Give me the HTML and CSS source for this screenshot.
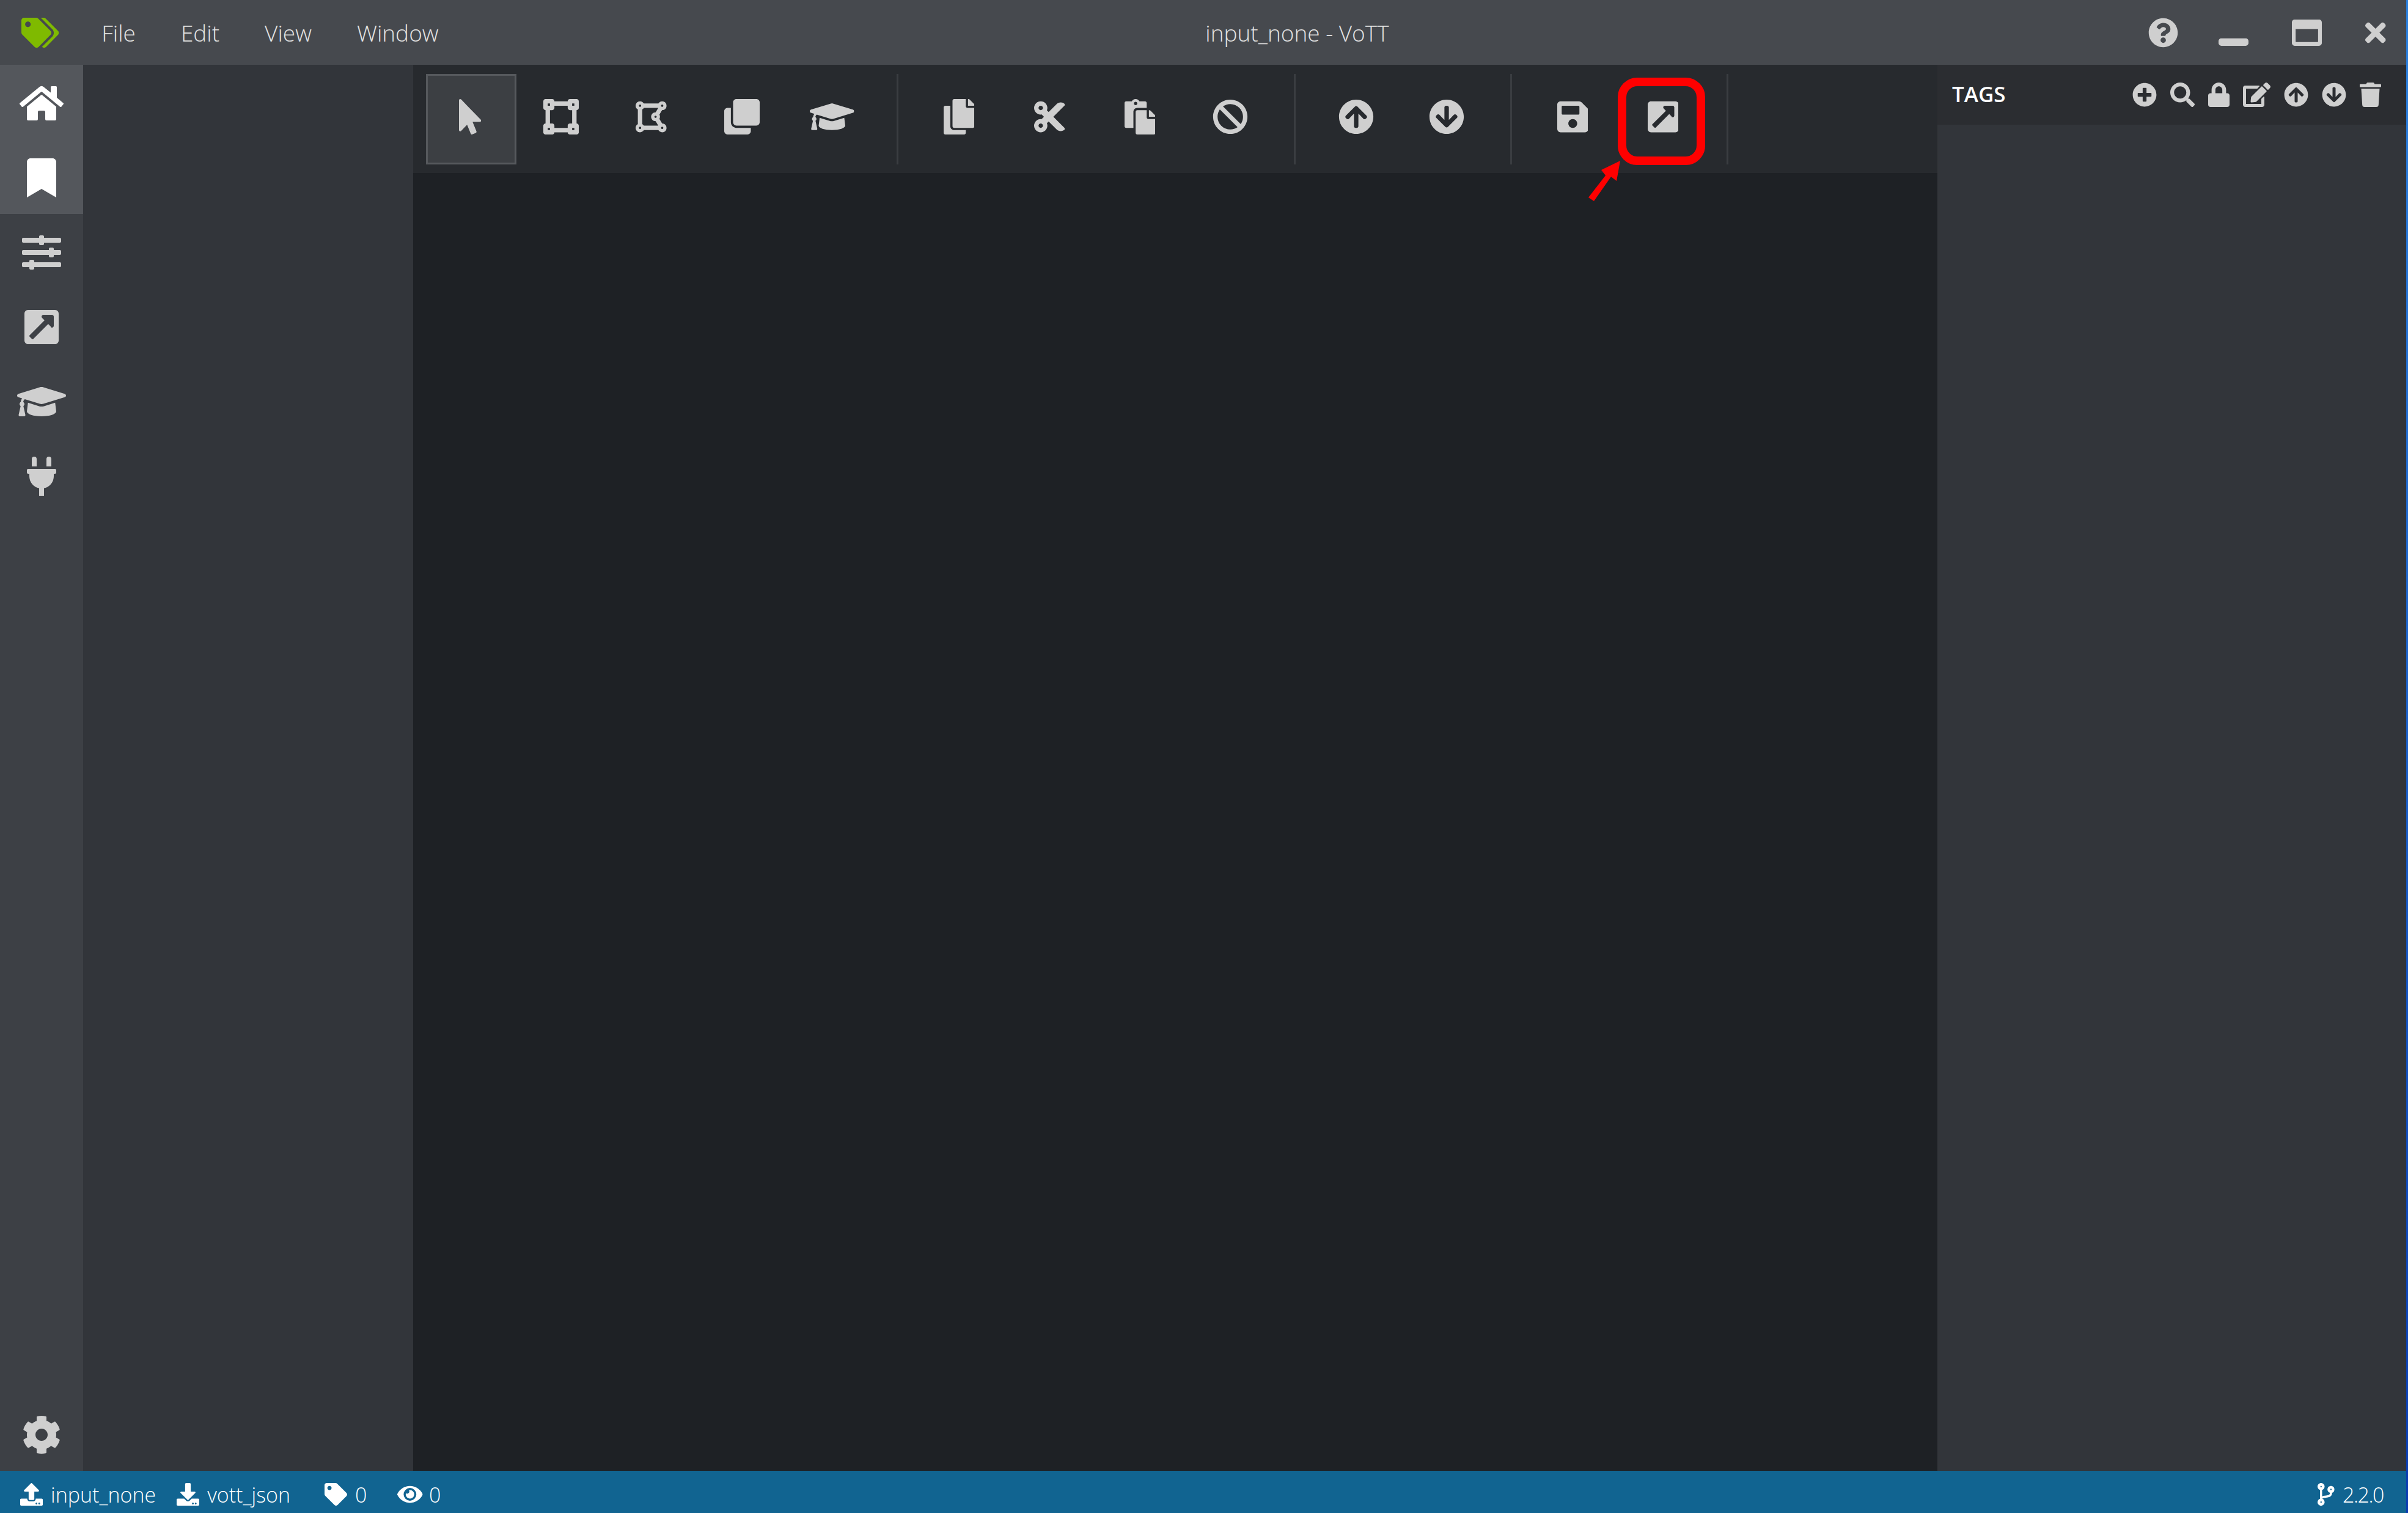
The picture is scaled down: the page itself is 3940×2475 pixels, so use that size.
FILE: index.html
```html
<!DOCTYPE html>
<html lang="en">

<head>
  <meta charset="utf-8" />
  <title>input_none - VoTT</title>
  <link rel="stylesheet" href="styles.css">
</head>

<body>
  <svg class="sprite" xmlns="http://www.w3.org/2000/svg">
    <symbol id="i-tags" viewBox="0 0 640 512"><path d="M497.941 225.941L286.059 14.059A48 48 0 0 0 252.118 0H48C21.49 0 0 21.49 0 48v204.118a48 48 0 0 0 14.059 33.941l211.882 211.882c18.744 18.745 49.136 18.746 67.882 0l204.118-204.118c18.745-18.745 18.745-49.137 0-67.882zM112 160c-26.51 0-48-21.49-48-48s21.49-48 48-48 48 21.49 48 48-21.49 48-48 48zm513.941 133.823L421.823 497.941c-18.745 18.745-49.137 18.745-67.882 0l-.36-.36L527.64 323.522c16.999-16.999 26.36-39.6 26.36-63.64s-9.362-46.641-26.36-63.64L331.397 0h48.721a48 48 0 0 1 33.941 14.059l211.882 211.882c18.745 18.745 18.745 49.137 0 67.882z"/></symbol>
    <symbol id="i-question" viewBox="0 0 512 512"><path d="M504 256c0 136.997-111.043 248-248 248S8 392.997 8 256C8 119.083 119.043 8 256 8s248 111.083 248 248zM262.655 90c-54.497 0-89.255 22.957-116.549 63.758-3.536 5.286-2.353 12.415 2.715 16.258l34.699 26.31c5.205 3.947 12.621 3.008 16.665-2.122 17.864-22.658 30.113-35.797 57.303-35.797 20.429 0 45.698 13.148 45.698 32.958 0 14.976-12.363 22.667-32.534 33.976C247.128 238.528 216 254.941 216 296v4c0 6.627 5.373 12 12 12h56c6.627 0 12-5.373 12-12v-1.333c0-28.462 83.186-29.647 83.186-106.667 0-58.002-60.165-102-116.531-102zM256 338c-25.365 0-46 20.635-46 46 0 25.364 20.635 46 46 46s46-20.636 46-46c0-25.365-20.635-46-46-46z"/></symbol>
    <symbol id="i-minimize" viewBox="0 0 512 512"><path d="M464 352H48c-26.5 0-48 21.5-48 48v32c0 26.5 21.5 48 48 48h416c26.5 0 48-21.5 48-48v-32c0-26.5-21.5-48-48-48z"/></symbol>
    <symbol id="i-maximize" viewBox="0 0 512 512"><path d="M464 32H48C21.5 32 0 53.5 0 80v352c0 26.5 21.5 48 48 48h416c26.5 0 48-21.5 48-48V80c0-26.5-21.5-48-48-48zm-16 372c0 6.6-5.4 12-12 12H76c-6.6 0-12-5.4-12-12V192h384v212z"/></symbol>
    <symbol id="i-times" viewBox="0 0 352 512"><path d="M242.72 256l100.07-100.07c12.28-12.28 12.28-32.19 0-44.48l-22.24-22.24c-12.28-12.28-32.19-12.28-44.48 0L176 189.28 75.93 89.21c-12.28-12.28-32.19-12.28-44.48 0L9.21 111.45c-12.28 12.28-12.28 32.19 0 44.48L109.28 256 9.21 356.07c-12.28 12.28-12.28 32.19 0 44.48l22.24 22.24c12.28 12.28 32.2 12.28 44.48 0L176 322.72l100.07 100.07c12.28 12.28 32.2 12.28 44.48 0l22.24-22.24c12.28-12.28 12.28-32.19 0-44.48L242.72 256z"/></symbol>
    <symbol id="i-home" viewBox="0 0 576 512"><path d="M280.37 148.26L96 300.11V464a16 16 0 0 0 16 16l112.06-.29a16 16 0 0 0 15.92-16V368a16 16 0 0 1 16-16h64a16 16 0 0 1 16 16v95.64a16 16 0 0 0 16 16.05L464 480a16 16 0 0 0 16-16V300L295.67 148.26a12.19 12.19 0 0 0-15.3 0zM571.6 251.47L488 182.56V44.05a12 12 0 0 0-12-12h-56a12 12 0 0 0-12 12v72.61L318.47 43a48 48 0 0 0-61 0L4.34 251.47a12 12 0 0 0-1.6 16.9l25.5 31A12 12 0 0 0 45.15 301l235.22-193.74a12.19 12.19 0 0 1 15.3 0L530.9 301a12 12 0 0 0 16.9-1.6l25.5-31a12 12 0 0 0-1.7-16.93z"/></symbol>
    <symbol id="i-bookmark" viewBox="0 0 384 512"><path d="M0 512V48C0 21.49 21.49 0 48 0h288c26.51 0 48 21.49 48 48v464L192 400 0 512z"/></symbol>
    <symbol id="i-sliders" viewBox="0 0 512 512"><path d="M496 384H160v-16c0-8.8-7.2-16-16-16h-32c-8.8 0-16 7.2-16 16v16H16c-8.8 0-16 7.2-16 16v32c0 8.8 7.2 16 16 16h80v16c0 8.8 7.2 16 16 16h32c8.8 0 16-7.2 16-16v-16h336c8.8 0 16-7.2 16-16v-32c0-8.8-7.2-16-16-16zm0-160h-80v-16c0-8.8-7.2-16-16-16h-32c-8.8 0-16 7.2-16 16v16H16c-8.8 0-16 7.2-16 16v32c0 8.8 7.2 16 16 16h336v16c0 8.8 7.2 16 16 16h32c8.8 0 16-7.2 16-16v-16h80c8.8 0 16-7.2 16-16v-32c0-8.8-7.2-16-16-16zm0-160H288V48c0-8.8-7.2-16-16-16h-32c-8.8 0-16 7.2-16 16v16H16C7.2 64 0 71.2 0 80v32c0 8.8 7.2 16 16 16h208v16c0 8.8 7.2 16 16 16h32c8.8 0 16-7.2 16-16v-16h208c8.8 0 16-7.2 16-16V80c0-8.8-7.2-16-16-16z"/></symbol>
    <symbol id="i-export" viewBox="0 0 448 512"><path d="M448 80v352c0 26.51-21.49 48-48 48H48c-26.51 0-48-21.49-48-48V80c0-26.51 21.49-48 48-48h352c26.51 0 48 21.49 48 48zm-88 16H248.029c-21.313 0-32.08 25.861-16.971 40.971l31.984 31.987L67.515 364.485c-4.686 4.686-4.686 12.284 0 16.971l31.029 31.029c4.687 4.686 12.285 4.686 16.971 0l195.526-195.526 31.988 31.991C347.713 273.793 384 263.16 384 239.9V120c0-13.255-10.745-24-24-24z"/></symbol>
    <symbol id="i-cap" viewBox="0 0 640 512"><path d="M622.34 153.2L343.4 67.5c-15.2-4.67-31.6-4.67-46.79 0L17.66 153.2c-23.54 7.23-23.54 38.36 0 45.59l48.63 14.94c-10.67 13.19-17.23 29.28-17.88 46.9C38.78 266.15 32 276.11 32 288c0 10.78 5.68 19.85 13.86 25.65L20.33 428.53C18.11 438.52 25.71 448 35.94 448h56.11c10.24 0 17.84-9.48 15.62-19.47L82.14 313.65C90.32 307.85 96 298.78 96 288c0-11.57-6.47-21.25-15.66-26.87.76-15.02 8.44-28.3 20.69-36.72L296.6 284.5c9.06 2.78 26.44 6.25 46.79 0l278.95-85.7c23.55-7.24 23.55-38.36 0-45.6zM352.79 315.09c-28.53 8.76-52.84 3.92-65.59 0l-145.02-44.55L128 384c0 35.35 85.96 64 192 64s192-28.65 192-64l-14.18-113.47-145.03 44.56z"/></symbol>
    <symbol id="i-plug" viewBox="0 0 384 512"><path d="M320,32a32,32,0,0,0-64,0v96h64Zm48,128H16A16,16,0,0,0,0,176v32a16,16,0,0,0,16,16H32v32A160.07,160.07,0,0,0,160,412.8V512h64V412.8A160.07,160.07,0,0,0,352,256V224h16a16,16,0,0,0,16-16V176A16,16,0,0,0,368,160ZM128,32a32,32,0,0,0-64,0v96h64Z"/></symbol>
    <symbol id="i-cog" viewBox="0 0 512 512"><path d="M487.4 315.7l-42.6-24.6c4.3-23.2 4.3-47 0-70.2l42.6-24.6c4.9-2.8 7.1-8.6 5.5-14-11.1-35.6-30-67.8-54.7-94.6-3.8-4.1-10-5.1-14.8-2.3L380.8 110c-17.9-15.4-38.5-27.3-60.8-35.1V25.8c0-5.6-3.9-10.5-9.4-11.7-36.7-8.2-74.3-7.8-109.2 0-5.5 1.2-9.4 6.1-9.4 11.7V75c-22.2 7.9-42.8 19.8-60.8 35.1L88.7 85.5c-4.9-2.8-11-1.9-14.8 2.3-24.7 26.7-43.6 58.9-54.7 94.6-1.7 5.4.6 11.2 5.5 14L67.3 221c-4.3 23.2-4.3 47 0 70.2l-42.6 24.6c-4.9 2.8-7.1 8.6-5.5 14 11.1 35.6 30 67.8 54.7 94.6 3.8 4.1 10 5.1 14.8 2.3l42.6-24.6c17.9 15.4 38.5 27.3 60.8 35.1v49.2c0 5.6 3.9 10.5 9.4 11.7 36.7 8.2 74.3 7.8 109.2 0 5.5-1.2 9.4-6.1 9.4-11.7v-49.2c22.2-7.9 42.8-19.8 60.8-35.1l42.6 24.6c4.9 2.8 11 1.9 14.8-2.3 24.7-26.7 43.6-58.9 54.7-94.6 1.5-5.5-.7-11.3-5.6-14.1zM256 336c-44.1 0-80-35.9-80-80s35.9-80 80-80 80 35.9 80 80-35.9 80-80 80z"/></symbol>
    <symbol id="i-pointer" viewBox="0 0 320 512"><path d="M302.189 329.126H196.105l55.831 135.993c3.889 9.428-.555 19.999-9.444 23.999l-49.165 21.427c-9.165 4-19.443-.571-23.332-9.714l-53.053-129.136-86.664 89.138C18.729 472.71 0 463.554 0 447.977V18.299C0 1.899 19.921-6.096 30.277 5.443l284.412 292.542c11.472 11.179 3.007 31.141-12.5 31.141z"/></symbol>
    <symbol id="i-vector" viewBox="0 0 512 512"><path d="M512 128V32c0-17.67-14.33-32-32-32h-96c-17.67 0-32 14.33-32 32H160c0-17.67-14.33-32-32-32H32C14.33 0 0 14.33 0 32v96c0 17.67 14.33 32 32 32v192c-17.67 0-32 14.33-32 32v96c0 17.67 14.33 32 32 32h96c17.67 0 32-14.33 32-32h192c0 17.67 14.33 32 32 32h96c17.67 0 32-14.33 32-32v-96c0-17.67-14.33-32-32-32V160c17.67 0 32-14.33 32-32zm-96-64h32v32h-32V64zM64 64h32v32H64V64zm32 384H64v-32h32v32zm352 0h-32v-32h32v32zm-32-96h-32c-17.67 0-32 14.33-32 32v32H160v-32c0-17.67-14.33-32-32-32H96V160h32c17.67 0 32-14.33 32-32V96h192v32c0 17.67 14.33 32 32 32h32v192z"/></symbol>
    <symbol id="i-polygon" viewBox="0 0 448 512"><path d="M384 352c-.35 0-.67.1-1.02.1l-39.2-65.32c5.07-9.17 8.22-19.56 8.22-30.78s-3.14-21.61-8.22-30.78l39.2-65.32c.35.01.67.1 1.02.1 35.35 0 64-28.65 64-64s-28.65-64-64-64c-23.63 0-44.04 12.95-55.12 32H119.12C108.04 44.95 87.63 32 64 32 28.65 32 0 60.65 0 96c0 23.63 12.95 44.04 32 55.12v209.75C12.95 371.96 0 392.37 0 416c0 35.35 28.65 64 64 64 23.63 0 44.04-12.95 55.12-32h209.75c11.09 19.05 31.49 32 55.12 32 35.35 0 64-28.65 64-64 .01-35.35-28.64-64-63.99-64zm-288 8.88V151.12A63.825 63.825 0 0 0 119.12 128h208.36l-38.46 64.1c-.35-.01-.67-.1-1.02-.1-35.35 0-64 28.65-64 64s28.65 64 64 64c.35 0 .67-.09 1.02-.1l38.46 64.1H119.12a63.825 63.825 0 0 0-23.12-23.12zM272 256c0-8.82 7.18-16 16-16s16 7.18 16 16-7.18 16-16 16-16-7.18-16-16zM400 96c0 8.82-7.18 16-16 16s-16-7.18-16-16 7.18-16 16-16 16 7.18 16 16zM64 80c8.82 0 16 7.18 16 16s-7.18 16-16 16-16-7.18-16-16 7.18-16 16-16zM48 416c0-8.82 7.18-16 16-16s16 7.18 16 16-7.18 16-16 16-16-7.18-16-16zm336 16c-8.82 0-16-7.18-16-16s7.18-16 16-16 16 7.18 16 16-7.18 16-16 16z"/></symbol>
    <symbol id="i-clone" viewBox="0 0 512 512"><path d="M464 0c26.51 0 48 21.49 48 48v288c0 26.51-21.49 48-48 48H176c-26.51 0-48-21.49-48-48V48c0-26.51 21.49-48 48-48h288M176 416c-44.112 0-80-35.888-80-80V128H48c-26.51 0-48 21.49-48 48v288c0 26.51 21.49 48 48 48h288c26.51 0 48-21.49 48-48v-48H176z"/></symbol>
    <symbol id="i-copy" viewBox="0 0 448 512"><path d="M320 448v40c0 13.255-10.745 24-24 24H24c-13.255 0-24-10.745-24-24V120c0-13.255 10.745-24 24-24h72v296c0 30.879 25.121 56 56 56h168zm0-344V0H152c-13.255 0-24 10.745-24 24v368c0 13.255 10.745 24 24 24h272c13.255 0 24-10.745 24-24V128H344c-13.2 0-24-10.8-24-24zm120.971-31.029L375.029 7.029A24 24 0 0 0 358.059 0H352v96h96v-6.059a24 24 0 0 0-7.029-16.97z"/></symbol>
    <symbol id="i-cut" viewBox="0 0 448 512"><path d="M278.06 256L444.48 89.57c4.69-4.69 4.69-12.29 0-16.97-32.8-32.8-85.99-32.8-118.79 0L210.18 188.12l-24.86-24.86c4.31-10.92 6.68-22.81 6.68-35.26 0-53.02-42.98-96-96-96S0 74.98 0 128s42.98 96 96 96c4.54 0 8.99-.32 13.36-.93L142.29 256l-32.93 32.93c-4.37-.61-8.83-.93-13.36-.93-53.02 0-96 42.98-96 96s42.98 96 96 96 96-42.98 96-96c0-12.45-2.37-24.34-6.68-35.26l24.86-24.86L325.69 439.4c32.8 32.8 85.99 32.8 118.79 0 4.69-4.68 4.69-12.28 0-16.97L278.06 256zM96 160c-17.64 0-32-14.36-32-32s14.36-32 32-32 32 14.36 32 32-14.36 32-32 32zm0 256c-17.64 0-32-14.36-32-32s14.36-32 32-32 32 14.36 32 32-14.36 32-32 32z"/></symbol>
    <symbol id="i-paste" viewBox="0 0 448 512"><path d="M128 184c0-30.879 25.122-56 56-56h136V56c0-13.255-10.745-24-24-24h-80.61C204.306 12.89 183.637 0 160 0s-44.306 12.89-55.39 32H24C10.745 32 0 42.745 0 56v336c0 13.255 10.745 24 24 24h104V184zm32-144c13.255 0 24 10.745 24 24s-10.745 24-24 24-24-10.745-24-24 10.745-24 24-24zm184 248h104v200c0 13.255-10.745 24-24 24H184c-13.255 0-24-10.745-24-24V184c0-13.255 10.745-24 24-24h136v104c0 13.2 10.8 24 24 24zm104-38.059V256h-96v-96h6.059a24 24 0 0 1 16.97 7.029l65.941 65.941a24.002 24.002 0 0 1 7.03 16.971z"/></symbol>
    <symbol id="i-ban" viewBox="0 0 512 512"><path d="M256 8C119.034 8 8 119.033 8 256s111.034 248 248 248 248-111.034 248-248S392.967 8 256 8zm130.108 117.892c65.448 65.448 70 165.481 20.677 235.637L150.47 105.216c70.204-49.356 170.226-44.735 235.638 20.676zM125.892 386.108c-65.448-65.448-70-165.481-20.677-235.637L361.53 406.784c-70.203 49.356-170.226 44.736-235.638-20.676z"/></symbol>
    <symbol id="i-up" viewBox="0 0 512 512"><path d="M8 256C8 119 119 8 256 8s248 111 248 248-111 248-248 248S8 393 8 256zm143.6 28.9l72.4-75.5V392c0 13.3 10.7 24 24 24h16c13.3 0 24-10.7 24-24V209.4l72.4 75.5c9.3 9.7 24.8 9.9 34.3.4l10.9-11c9.4-9.4 9.4-24.6 0-33.9L273 107.7c-9.4-9.4-24.6-9.4-33.9 0L106.3 240.4c-9.4 9.4-9.4 24.6 0 33.9l10.9 11c9.6 9.5 25.1 9.3 34.4-.4z"/></symbol>
    <symbol id="i-down" viewBox="0 0 512 512"><path d="M504 256c0 137-111 248-248 248S8 393 8 256 119 8 256 8s248 111 248 248zm-143.6-28.9L288 302.6V120c0-13.3-10.7-24-24-24h-16c-13.3 0-24 10.7-24 24v182.6l-72.4-75.5c-9.3-9.7-24.8-9.9-34.3-.4l-10.9 11c-9.4 9.4-9.4 24.6 0 33.9L239 404.3c9.4 9.4 24.6 9.4 33.9 0l132.7-132.7c9.4-9.4 9.4-24.6 0-33.9l-10.9-11c-9.5-9.5-25-9.3-34.3.4z"/></symbol>
    <symbol id="i-save" viewBox="0 0 448 512"><path d="M433.941 129.941l-83.882-83.882A48 48 0 0 0 316.118 32H48C21.49 32 0 53.49 0 80v352c0 26.51 21.49 48 48 48h352c26.51 0 48-21.49 48-48V163.882a48 48 0 0 0-14.059-33.941zM224 416c-35.346 0-64-28.654-64-64 0-35.346 28.654-64 64-64s64 28.654 64 64c0 35.346-28.654 64-64 64zm96-304.52V212c0 6.627-5.373 12-12 12H76c-6.627 0-12-5.373-12-12V108c0-6.627 5.373-12 12-12h228.52c3.183 0 6.235 1.264 8.485 3.515l3.48 3.48A11.996 11.996 0 0 1 320 111.48z"/></symbol>
    <symbol id="i-plus" viewBox="0 0 512 512"><path d="M256 8C119 8 8 119 8 256s111 248 248 248 248-111 248-248S393 8 256 8zm144 276c0 6.6-5.4 12-12 12h-92v92c0 6.6-5.4 12-12 12h-56c-6.6 0-12-5.4-12-12v-92h-92c-6.6 0-12-5.4-12-12v-56c0-6.6 5.4-12 12-12h92v-92c0-6.6 5.4-12 12-12h56c6.6 0 12 5.4 12 12v92h92c6.6 0 12 5.4 12 12v56z"/></symbol>
    <symbol id="i-search" viewBox="0 0 512 512"><path d="M505 442.7L405.3 343c-4.5-4.5-10.6-7-17-7H372c27.6-35.3 44-79.7 44-128C416 93.1 322.9 0 208 0S0 93.1 0 208s93.1 208 208 208c48.3 0 92.7-16.4 128-44v16.3c0 6.4 2.5 12.5 7 17l99.7 99.7c9.4 9.4 24.6 9.4 33.9 0l28.3-28.3c9.4-9.4 9.4-24.6.1-34zM208 336c-70.7 0-128-57.2-128-128 0-70.7 57.2-128 128-128 70.7 0 128 57.2 128 128 0 70.7-57.2 128-128 128z"/></symbol>
    <symbol id="i-lock" viewBox="0 0 448 512"><path d="M400 224h-24v-72C376 68.2 307.8 0 224 0S72 68.2 72 152v72H48c-26.5 0-48 21.5-48 48v192c0 26.5 21.5 48 48 48h352c26.5 0 48-21.5 48-48V272c0-26.5-21.5-48-48-48zm-104 0H152v-72c0-39.7 32.3-72 72-72s72 32.3 72 72v72z"/></symbol>
    <symbol id="i-edit" viewBox="0 0 576 512"><path d="M402.6 83.2l90.2 90.2c3.8 3.8 3.8 10 0 13.8L274.4 405.6l-92.8 10.3c-12.4 1.4-22.9-9.1-21.5-21.5l10.3-92.8L388.8 83.2c3.8-3.8 10-3.8 13.8 0zm162-22.9l-48.8-48.8c-15.2-15.2-39.9-15.2-55.2 0l-35.4 35.4c-3.8 3.8-3.8 10 0 13.8l90.2 90.2c3.8 3.8 10 3.8 13.8 0l35.4-35.4c15.2-15.3 15.2-40 0-55.2zM384 346.2V448H64V128h229.8c3.2 0 6.2-1.3 8.5-3.5l40-40c7.6-7.6 2.2-20.5-8.5-20.5H48C21.5 64 0 85.5 0 112v352c0 26.5 21.5 48 48 48h352c26.5 0 48-21.5 48-48V306.2c0-10.7-12.9-16-20.5-8.5l-40 40c-2.2 2.3-3.5 5.3-3.5 8.5z"/></symbol>
    <symbol id="i-trash" viewBox="0 0 448 512"><path d="M432 32H312l-9.4-18.7A24 24 0 0 0 281.1 0H166.8a23.72 23.72 0 0 0-21.4 13.3L136 32H16A16 16 0 0 0 0 48v32a16 16 0 0 0 16 16h416a16 16 0 0 0 16-16V48a16 16 0 0 0-16-16zM53.2 467a48 48 0 0 0 47.9 45h245.8a48 48 0 0 0 47.9-45L416 128H32z"/></symbol>
    <symbol id="i-upload" viewBox="0 0 512 512"><path d="M296 384h-80c-13.3 0-24-10.7-24-24V192h-87.7c-17.8 0-26.7-21.5-14.1-34.1L242.3 5.7c7.5-7.5 19.8-7.5 27.3 0l152.2 152.2c12.6 12.6 3.7 34.1-14.1 34.1H320v168c0 13.3-10.7 24-24 24zm216-8v112c0 13.3-10.7 24-24 24H24c-13.3 0-24-10.7-24-24V376c0-13.3 10.7-24 24-24h136v8c0 30.9 25.1 56 56 56h80c30.9 0 56-25.1 56-56v-8h136c13.3 0 24 10.7 24 24zm-124 88c0-11-9-20-20-20s-20 9-20 20 9 20 20 20 20-9 20-20zm64 0c0-11-9-20-20-20s-20 9-20 20 9 20 20 20 20-9 20-20z"/></symbol>
    <symbol id="i-download" viewBox="0 0 512 512"><path d="M216 0h80c13.3 0 24 10.7 24 24v168h87.7c17.8 0 26.7 21.5 14.1 34.1L269.7 378.3c-7.5 7.5-19.8 7.5-27.3 0L90.1 226.1c-12.6-12.6-3.7-34.1 14.1-34.1H192V24c0-13.3 10.7-24 24-24zm296 376v112c0 13.3-10.7 24-24 24H24c-13.3 0-24-10.7-24-24V376c0-13.3 10.7-24 24-24h146.7l49 49c20.1 20.1 52.5 20.1 72.6 0l49-49H488c13.3 0 24 10.7 24 24zm-124 88c0-11-9-20-20-20s-20 9-20 20 9 20 20 20 20-9 20-20zm64 0c0-11-9-20-20-20s-20 9-20 20 9 20 20 20 20-9 20-20z"/></symbol>
    <symbol id="i-tag" viewBox="0 0 512 512"><path d="M0 252.118V48C0 21.49 21.49 0 48 0h204.118a48 48 0 0 1 33.941 14.059l211.882 211.882c18.745 18.745 18.745 49.137 0 67.882L293.823 497.941c-18.745 18.745-49.137 18.745-67.882 0L14.059 286.059A48 48 0 0 1 0 252.118zM112 64c-26.51 0-48 21.49-48 48s21.49 48 48 48 48-21.49 48-48-21.49-48-48-48z"/></symbol>
    <symbol id="i-eye" viewBox="0 0 576 512"><path d="M572.52 241.4C518.29 135.59 410.93 64 288 64S57.68 135.64 3.48 241.41a32.35 32.35 0 0 0 0 29.19C57.71 376.41 165.07 448 288 448s230.32-71.64 284.52-177.41a32.35 32.35 0 0 0 0-29.19zM288 400a144 144 0 1 1 144-144 143.93 143.93 0 0 1-144 144zm0-240a95.31 95.31 0 0 0-25.31 3.79 47.85 47.85 0 0 1-66.9 66.9A95.78 95.78 0 1 0 288 160z"/></symbol>
    <symbol id="i-branch" viewBox="0 0 384 512"><path d="M384 144c0-44.2-35.8-80-80-80s-80 35.8-80 80c0 36.4 24.3 67.1 57.5 76.8-.6 16.1-4.2 28.5-11 36.9-15.4 19.2-49.3 22.4-85.2 25.7-28.2 2.6-57.4 5.4-81.3 16.9v-144c32.5-10.2 56-40.5 56-76.3 0-44.2-35.8-80-80-80S0 35.8 0 80c0 35.8 23.5 66.1 56 76.3v199.3C23.5 365.9 0 396.2 0 432c0 44.2 35.8 80 80 80s80-35.8 80-80c0-34-21.2-63.1-51.2-74.6 3.1-5.2 7.8-9.8 14.9-13.4 16.2-8.2 40.4-10.4 66.1-12.8 42.2-3.9 90-8.4 118.2-43.4 14-17.4 21.1-39.8 21.5-67.9 31.6-10.8 54.5-40.7 54.5-76.2zM80 64c8.8 0 16 7.2 16 16s-7.2 16-16 16-16-7.2-16-16 7.2-16 16-16zm0 384c-8.8 0-16-7.2-16-16s7.2-16 16-16 16 7.2 16 16-7.2 16-16 16zm224-320c8.8 0 16 7.2 16 16s-7.2 16-16 16-16-7.2-16-16 7.2-16 16-16z"/></symbol>
  </svg>

  <div class="window">
    <header class="titlebar">
      <svg class="logo" viewBox="0 0 640 512"><use href="#i-tags" /></svg>
      <nav class="menu">
        <span>File</span>
        <span>Edit</span>
        <span>View</span>
        <span>Window</span>
      </nav>
      <div class="title">input_none - VoTT</div>
      <div class="controls">
        <svg class="icon" viewBox="0 0 512 512"><use href="#i-question" /></svg>
        <svg class="icon" viewBox="0 0 512 512"><use href="#i-minimize" /></svg>
        <svg class="icon control-max" viewBox="0 0 512 512"><use href="#i-maximize" /></svg>
        <svg class="icon control-close" viewBox="0 0 352 512"><use href="#i-times" /></svg>
      </div>
    </header>

    <div class="main">
      <aside class="rail">
        <div class="rail-item active"><svg class="icon" viewBox="0 0 576 512"><use href="#i-home" /></svg></div>
        <div class="rail-item active"><svg class="icon" viewBox="0 0 384 512"><use href="#i-bookmark" /></svg></div>
        <div class="rail-item"><svg class="icon" viewBox="0 0 512 512"><use href="#i-sliders" /></svg></div>
        <div class="rail-item"><svg class="icon" viewBox="0 0 448 512"><use href="#i-export" /></svg></div>
        <div class="rail-item"><svg class="icon" viewBox="0 0 640 512"><use href="#i-cap" /></svg></div>
        <div class="rail-item"><svg class="icon" viewBox="0 0 384 512"><use href="#i-plug" /></svg></div>
        <div class="rail-item rail-bottom"><svg class="icon" viewBox="0 0 512 512"><use href="#i-cog" /></svg></div>
      </aside>

      <aside class="assets"></aside>

      <section class="editor">
        <div class="toolbar">
          <div class="tool-group">
            <div class="tool selected"><svg class="icon" viewBox="0 0 320 512"><use href="#i-pointer" /></svg></div>
            <div class="tool"><svg class="icon" viewBox="0 0 512 512"><use href="#i-vector" /></svg></div>
            <div class="tool"><svg class="icon" viewBox="0 0 448 512"><use href="#i-polygon" /></svg></div>
            <div class="tool"><svg class="icon" viewBox="0 0 512 512"><use href="#i-clone" /></svg></div>
            <div class="tool"><svg class="icon" viewBox="0 0 640 512"><use href="#i-cap" /></svg></div>
          </div>
          <div class="tool-group">
            <div class="tool"><svg class="icon" viewBox="0 0 448 512"><use href="#i-copy" /></svg></div>
            <div class="tool"><svg class="icon" viewBox="0 0 448 512"><use href="#i-cut" /></svg></div>
            <div class="tool"><svg class="icon" viewBox="0 0 448 512"><use href="#i-paste" /></svg></div>
            <div class="tool"><svg class="icon" viewBox="0 0 512 512"><use href="#i-ban" /></svg></div>
          </div>
          <div class="tool-group">
            <div class="tool"><svg class="icon" viewBox="0 0 512 512"><use href="#i-up" /></svg></div>
            <div class="tool"><svg class="icon" viewBox="0 0 512 512"><use href="#i-down" /></svg></div>
          </div>
          <div class="tool-group">
            <div class="tool"><svg class="icon" viewBox="0 0 448 512"><use href="#i-save" /></svg></div>
            <div class="tool">
              <svg class="icon" viewBox="0 0 448 512"><use href="#i-export" /></svg>
              <!-- red call-out drawn over the export button -->
              <div class="callout-box"></div>
              <svg class="callout-arrow" viewBox="0 0 60 72"><polygon points="0,61 28,25 21,16 52,1 46,34 37,27 9,67" /></svg>
            </div>
          </div>
        </div>
        <div class="canvas"></div>
      </section>

      <aside class="tags">
        <div class="tags-header">
          <h3>TAGS</h3>
          <div class="tags-actions">
            <svg class="icon" viewBox="0 0 512 512"><use href="#i-plus" /></svg>
            <svg class="icon" viewBox="0 0 512 512"><use href="#i-search" /></svg>
            <svg class="icon" viewBox="0 0 448 512"><use href="#i-lock" /></svg>
            <svg class="icon" viewBox="0 0 576 512"><use href="#i-edit" /></svg>
            <svg class="icon" viewBox="0 0 512 512"><use href="#i-up" /></svg>
            <svg class="icon" viewBox="0 0 512 512"><use href="#i-down" /></svg>
            <svg class="icon" viewBox="0 0 448 512"><use href="#i-trash" /></svg>
          </div>
        </div>
      </aside>
    </div>

    <footer class="statusbar">
      <div class="status-item"><svg class="icon" viewBox="0 0 512 512"><use href="#i-upload" /></svg>input_none</div>
      <div class="status-item status-target"><svg class="icon" viewBox="0 0 512 512"><use href="#i-download" /></svg>vott_json</div>
      <div class="status-item status-tags"><svg class="icon" viewBox="0 0 512 512"><use href="#i-tag" /></svg>0</div>
      <div class="status-item status-views"><svg class="icon" viewBox="0 0 576 512"><use href="#i-eye" /></svg>0</div>
      <div class="status-item status-version"><svg class="icon" viewBox="0 0 384 512"><use href="#i-branch" /></svg>2.2.0</div>
    </footer>
  </div>
</body>

</html>
```

FILE: styles.css
```css
* {
  box-sizing: border-box;
}

html,
body {
  height: 100%;
}

body {
  font-family: 'Open Sans', 'Liberation Sans', sans-serif;
  font-weight: 300;
  margin: 0;
  overflow: hidden;
}

.sprite {
  display: none;
}

.icon {
  display: block;
  fill: currentColor;
  flex: none;
}

.window {
  background: linear-gradient(#2b7fdc, #0a3cb0);
  display: flex;
  flex-direction: column;
  height: 100%;
  padding-right: 3px;
}

/* title bar */

.titlebar {
  align-items: center;
  background: #46494e;
  color: #e2e2e2;
  display: flex;
  flex: none;
  font-size: 37px;
  height: 106px;
  padding: 0 33px 0 35px;
}

.logo {
  display: block;
  fill: #7fba00;
  height: 49px;
  margin-right: 70px;
}

.menu {
  display: flex;
  gap: 74px;
}

.title {
  flex: 1;
  padding-left: 12px;
  text-align: center;
}

.controls {
  align-items: center;
  color: #cfcfcf;
  display: flex;
  gap: 66px;
}

.controls .icon {
  height: 49px;
}

.control-max {
  margin-left: 5px;
}

.control-close {
  margin-left: 5px;
}

/* main area */

.main {
  display: flex;
  flex: 1;
  min-height: 0;
}

.rail {
  background: #3d4045;
  color: #cfcfcf;
  display: flex;
  flex: none;
  flex-direction: column;
  width: 136px;
}

.rail-item {
  align-items: center;
  display: flex;
  flex: none;
  height: 122px;
  justify-content: center;
  padding-top: 4px;
}

.rail-item .icon {
  height: 64px;
}

.rail-item.active {
  background: #54575c;
  color: #fff;
}

.rail-bottom {
  margin-top: auto;
}

.assets {
  background: #32353a;
  flex: none;
  width: 540px;
}

.editor {
  display: flex;
  flex: 1;
  flex-direction: column;
  min-width: 0;
}

.toolbar {
  background: #272a2e;
  color: #cfcfcf;
  display: flex;
  flex: none;
  height: 177px;
  padding: 15px 21px 14px;
}

.tool-group {
  border-right: 3px solid #3a3d41;
  display: flex;
  margin-right: 25px;
  padding-right: 30px;
}

.tool {
  align-items: center;
  display: flex;
  height: 148px;
  justify-content: center;
  padding-bottom: 8px;
  position: relative;
  width: 148px;
}

.tool-group:first-child .tool {
  padding-right: 3px;
}

.tool .icon {
  height: 58px;
}

.tool.selected {
  background: #3c3f43;
  border: 3px solid #56595d;
}

.callout-box {
  border: 14px solid #f00;
  border-radius: 32px;
  height: 143px;
  left: 0;
  position: absolute;
  top: 6px;
  width: 143px;
}

.callout-arrow {
  fill: #f00;
  height: 72px;
  left: -48px;
  position: absolute;
  top: 141px;
  width: 60px;
}

.canvas {
  background: #1e2125;
  flex: 1;
}

.tags {
  background: #32353a;
  flex: none;
  width: 767px;
}

.tags-header {
  align-items: center;
  background: #2b2d31;
  color: #cfcfcf;
  display: flex;
  height: 98px;
  justify-content: space-between;
  padding: 0 41px 0 24px;
}

.tags-header h3 {
  color: #fff;
  font-size: 35px;
  font-weight: 600;
  margin: 0 0 4px;
}

.tags-actions {
  display: flex;
  gap: 22px;
}

.tags-actions .icon {
  height: 40px;
}

/* status bar */

.statusbar {
  align-items: center;
  background: #116491;
  color: #fff;
  display: flex;
  flex: none;
  font-size: 34px;
  height: 69px;
  padding: 8px 37px 0 33px;
}

.status-item {
  align-items: center;
  display: flex;
  gap: 13px;
}

.status-item .icon {
  height: 37px;
}

.status-target {
  margin-left: 34px;
}

.status-tags {
  margin-left: 56px;
}

.status-views {
  gap: 10px;
  margin-left: 50px;
}

.status-version {
  letter-spacing: -1.5px;
  margin-left: auto;
}
```
